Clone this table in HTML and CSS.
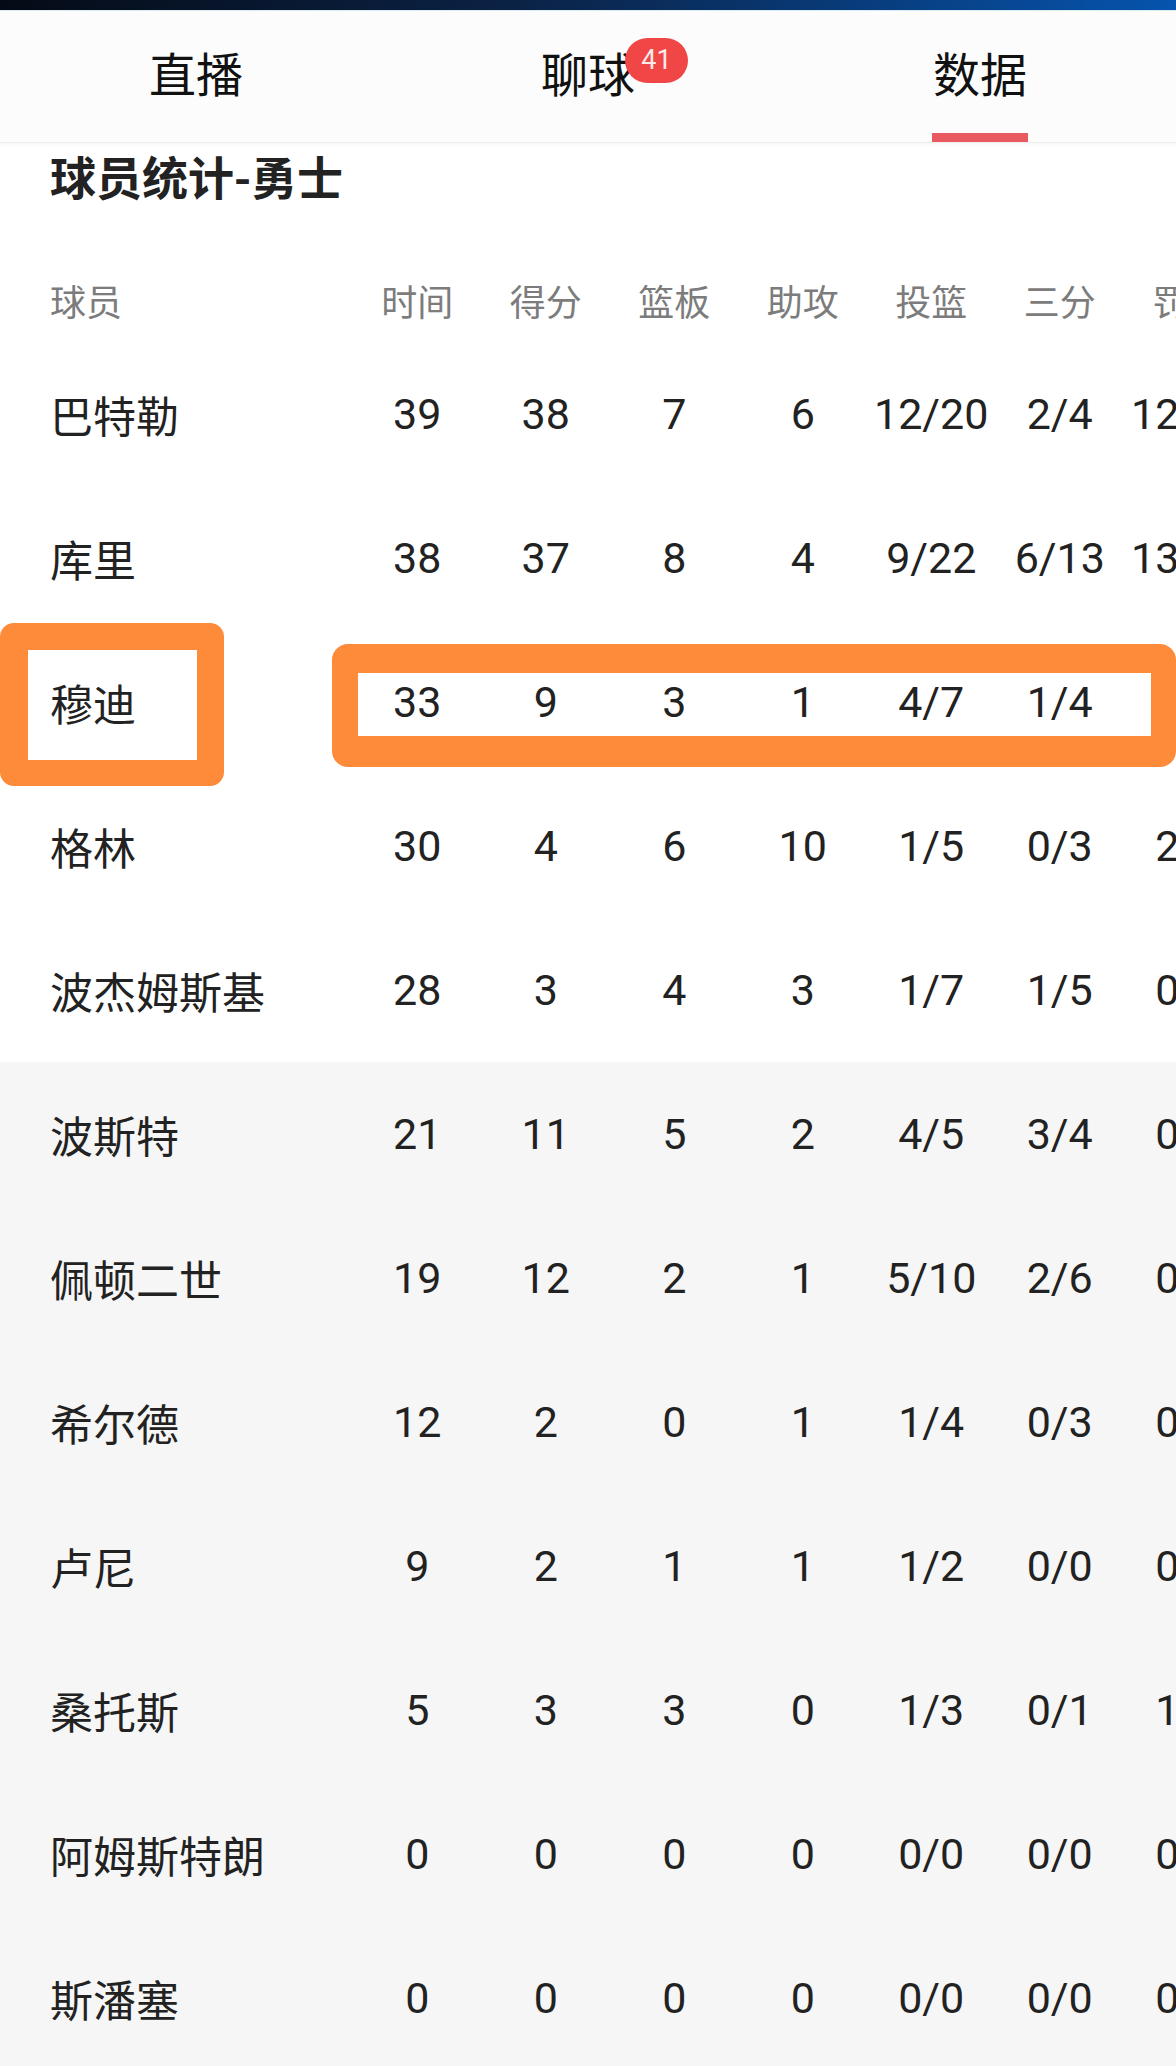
FILE: index.html
```html
<!DOCTYPE html>
<html lang="zh-CN">
<head>
<meta charset="utf-8">
<title>球员统计-勇士</title>
<link rel="stylesheet" href="styles.css">
</head>
<body>
<div class="page">
  <div class="topbar"></div>
  <nav class="tabs">
    <div class="tab"><span class="tab-label">直播</span></div>
    <div class="tab"><span class="tab-label">聊球<span class="badge">41</span></span></div>
    <div class="tab active"><span class="tab-label">数据</span></div>
  </nav>
  <section class="stats">
    <h2 class="title">球员统计-勇士</h2>
    <div class="table">
      <div class="row head">
        <div class="name">球员</div><div>时间</div><div>得分</div><div>篮板</div><div>助攻</div><div>投篮</div><div>三分</div><div>罚球</div>
      </div>
      <div class="row">
        <div class="name">巴特勒</div><div>39</div><div>38</div><div>7</div><div>6</div><div>12/20</div><div>2/4</div><div>12/13</div>
      </div>
      <div class="row">
        <div class="name">库里</div><div>38</div><div>37</div><div>8</div><div>4</div><div>9/22</div><div>6/13</div><div>13/14</div>
      </div>
      <div class="row marked">
        <div class="name">穆迪</div><div>33</div><div>9</div><div>3</div><div>1</div><div>4/7</div><div>1/4</div><div>0/0</div>
        <span class="mark mark-name"></span>
        <span class="mark mark-stats"></span>
      </div>
      <div class="row">
        <div class="name">格林</div><div>30</div><div>4</div><div>6</div><div>10</div><div>1/5</div><div>0/3</div><div>2/2</div>
      </div>
      <div class="row">
        <div class="name">波杰姆斯基</div><div>28</div><div>3</div><div>4</div><div>3</div><div>1/7</div><div>1/5</div><div>0/0</div>
      </div>
      <div class="row bench">
        <div class="name">波斯特</div><div>21</div><div>11</div><div>5</div><div>2</div><div>4/5</div><div>3/4</div><div>0/0</div>
      </div>
      <div class="row bench">
        <div class="name">佩顿二世</div><div>19</div><div>12</div><div>2</div><div>1</div><div>5/10</div><div>2/6</div><div>0/0</div>
      </div>
      <div class="row bench">
        <div class="name">希尔德</div><div>12</div><div>2</div><div>0</div><div>1</div><div>1/4</div><div>0/3</div><div>0/0</div>
      </div>
      <div class="row bench">
        <div class="name">卢尼</div><div>9</div><div>2</div><div>1</div><div>1</div><div>1/2</div><div>0/0</div><div>0/0</div>
      </div>
      <div class="row bench">
        <div class="name">桑托斯</div><div>5</div><div>3</div><div>3</div><div>0</div><div>1/3</div><div>0/1</div><div>1/2</div>
      </div>
      <div class="row bench">
        <div class="name">阿姆斯特朗</div><div>0</div><div>0</div><div>0</div><div>0</div><div>0/0</div><div>0/0</div><div>0/0</div>
      </div>
      <div class="row bench">
        <div class="name">斯潘塞</div><div>0</div><div>0</div><div>0</div><div>0</div><div>0/0</div><div>0/0</div><div>0/0</div>
      </div>
    </div>
  </section>
</div>
</body>
</html>
```
FILE: styles.css
```css
html, body {
  margin: 0;
  padding: 0;
  background: #ffffff;
}
body {
  width: 1176px;
  overflow: hidden;
  font-family: Roboto, "Noto Sans CJK SC", "Noto Sans", sans-serif;
  color: #222222;
}
.page {
  width: 1176px;
  overflow: hidden;
}
.topbar {
  height: 10px;
  background: linear-gradient(90deg, #050b16 0%, #0b2347 45%, #0654ae 100%);
  border-bottom: 1px solid #d9eef2;
}
.tabs {
  display: grid;
  grid-template-columns: repeat(3, 1fr);
  height: 131px;
  background: #fcfcfc;
  border-bottom: 1px solid #eeeeee;
  box-shadow: 0 2px 4px rgba(0, 0, 0, 0.04);
  position: relative;
  z-index: 2;
}
.tab {
  display: flex;
  align-items: center;
  justify-content: center;
  padding-bottom: 10px;
  position: relative;
}
.tab-label {
  position: relative;
  font-family: "Noto Sans CJK SC", sans-serif;
  font-size: 47px;
  line-height: 1;
  color: #111111;
}
.tab.active::after {
  content: "";
  position: absolute;
  left: 50%;
  bottom: 0;
  width: 96px;
  height: 9px;
  margin-left: -48px;
  background: #e95a60;
}
.badge {
  position: absolute;
  left: 84px;
  top: -10px;
  height: 45px;
  min-width: 63px;
  padding: 0 8px;
  box-sizing: border-box;
  border-radius: 23px;
  background: #f04646;
  color: #fbeaea;
  font-family: Roboto, sans-serif;
  font-size: 27px;
  line-height: 45px;
  text-align: center;
}
.stats {
  background: #ffffff;
}
.title {
  margin: 0;
  height: 114px;
  box-sizing: border-box;
  padding: 4px 0 0 50px;
  font-family: "Noto Sans CJK SC", sans-serif;
  font-size: 46px;
  font-weight: 700;
  line-height: 56px;
  color: #222222;
}
.table {
  display: flex;
  flex-direction: column;
}
.row {
  display: grid;
  grid-template-columns: 353px repeat(7, 128.5px);
  align-items: center;
  height: 144px;
  font-size: 43px;
  color: #222222;
  position: relative;
  white-space: nowrap;
}
.row > div {
  text-align: center;
}
.row > .name {
  text-align: left;
  padding-left: 50px;
  font-family: "Noto Sans CJK SC", sans-serif;
}
.row.head {
  height: 85px;
  font-size: 36px;
  color: #7c7c7c;
  font-family: "Noto Sans CJK SC", sans-serif;
}
.row.bench {
  background: #f6f6f6;
}
.mark {
  position: absolute;
  border: 27px solid #fd8b3a;
  box-sizing: border-box;
  z-index: 3;
}
.mark-name {
  left: 0;
  top: -7px;
  width: 224px;
  height: 163px;
  border-radius: 14px;
  border-width: 27px 27px 26px 28px;
}
.mark-stats {
  left: 332px;
  top: 14px;
  width: 844px;
  height: 123px;
  border-radius: 16px;
  border-width: 29px 25px 31px 26px;
}
```
